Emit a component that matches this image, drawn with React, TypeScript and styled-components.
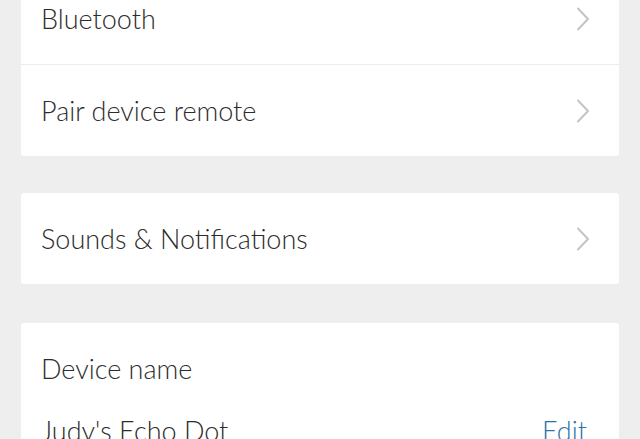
import React from "react";
import styled, { createGlobalStyle } from "styled-components";

const GlobalStyle = createGlobalStyle`
  html, body {
    margin: 0;
    padding: 0;
    background: #eeeeee;
    overflow: hidden;
  }
  body {
    font-family: Lato, "Open Sans", sans-serif;
    color: #2c2c2c;
  }
`;

const Page = styled.div`
  width: 640px;
  height: 439px;
  box-sizing: border-box;
  padding: 0 21px;
  display: flex;
  flex-direction: column;
  gap: 37px;
  overflow: hidden;
`;

const Card = styled.section<{ $shift?: number }>`
  background: #ffffff;
  border-radius: 3px;
  margin-top: ${({ $shift }) => ($shift ? `${$shift}px` : "0")};
  flex-shrink: 0;
`;

const Row = styled.div`
  height: 91px;
  display: flex;
  align-items: center;
  justify-content: space-between;
  padding: 0 29px 0 20px;
  & + & {
    border-top: 1px solid #ececec;
  }
`;

const Label = styled.span`
  font-size: 27px;
  font-weight: 300;
  line-height: 32px;
`;

const Field = styled.div`
  padding: 30px 32px 0 20px;
  display: flex;
  flex-direction: column;
  gap: 30px;
`;

const FieldLine = styled.div`
  display: flex;
  align-items: baseline;
  justify-content: space-between;
`;

const EditLink = styled.a`
  font-size: 27px;
  font-weight: 300;
  line-height: 32px;
  color: #2b72a8;
  text-decoration: none;
`;

const Chevron = () => (
  <svg width="14" height="24" viewBox="0 0 14 24" fill="none">
    <path d="M2 1.5 L12 12 L2 22.5" stroke="#c4c4c4" strokeWidth="2" strokeLinecap="round" strokeLinejoin="round" />
  </svg>
);

const NavRow = ({ label }: { label: string }) => (
  <Row>
    <Label>{label}</Label>
    <Chevron />
  </Row>
);

const App = () => (
  <>
    <GlobalStyle />
    <Page>
      <Card $shift={-27}>
        <NavRow label="Bluetooth" />
        <NavRow label="Pair device remote" />
      </Card>
      <Card>
        <NavRow label="Sounds & Notifications" />
      </Card>
      <Card $shift={2}>
        <Field>
          <Label>Device name</Label>
          <FieldLine>
            <Label>Judy's Echo Dot</Label>
            <EditLink href="#">Edit</EditLink>
          </FieldLine>
        </Field>
      </Card>
    </Page>
  </>
);

export default App;
